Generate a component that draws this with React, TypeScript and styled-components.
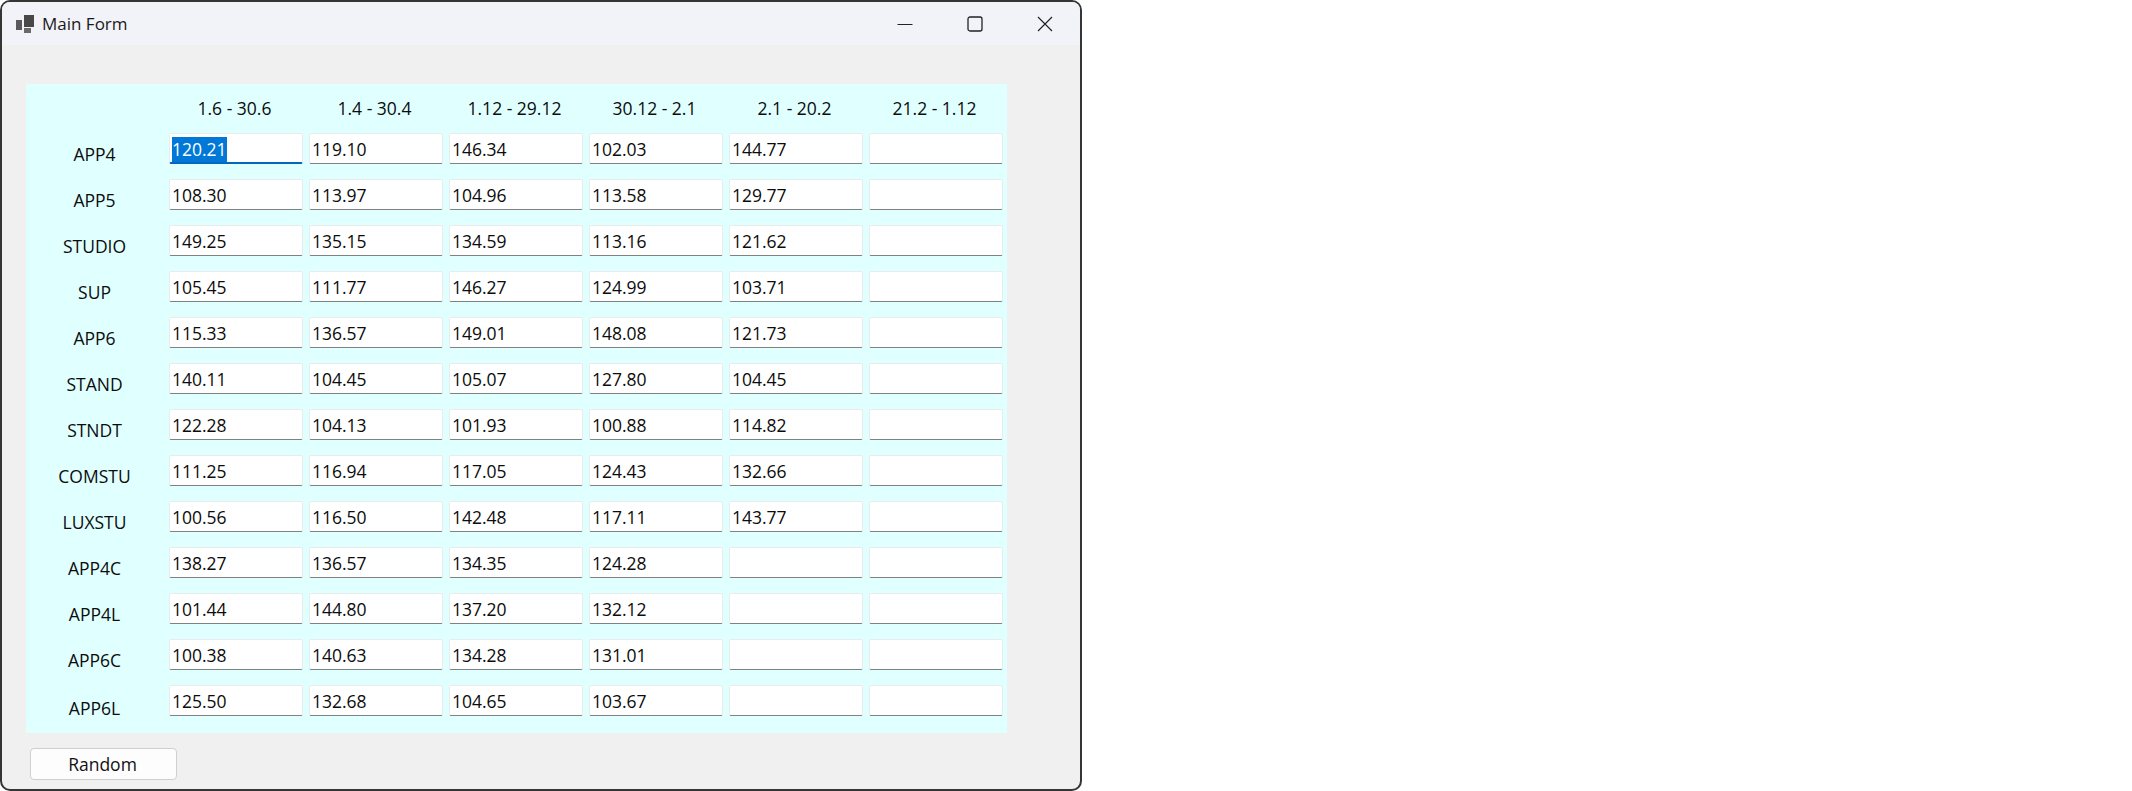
import React from "react";
import styled, { createGlobalStyle } from "styled-components";

const Global = createGlobalStyle`
  html, body { margin: 0; padding: 0; background: #fff; }
  #root { width: 2132px; height: 791px; overflow: hidden; }
`;

const Win = styled.div`
  width: 1082px;
  height: 791px;
  box-sizing: border-box;
  border: 2px solid #353535;
  border-radius: 10px;
  background: #f0f0f0;
  overflow: hidden;
  display: flex;
  flex-direction: column;
  font-family: "Open Sans", "Noto Sans", sans-serif;
  font-size: 17.5px;
  color: #0c0c0c;
`;

const TitleBar = styled.div`
  height: 43px;
  flex: none;
  background: #f2f3f9;
  display: flex;
  align-items: center;
  padding-left: 13px;
`;

const AppIcon = styled.svg`
  width: 20px;
  height: 20px;
  margin-right: 7px;
  margin-top: 2px;
`;

const Title = styled.span`
  flex: 1;
  font-size: 17px;
  color: #1a1a1a;
`;

const Caption = styled.button`
  width: 70px;
  height: 43px;
  border: 0;
  padding: 0;
  background: transparent;
  display: flex;
  align-items: center;
  justify-content: center;
`;

const Body = styled.div`
  flex: 1;
  display: flex;
  flex-direction: column;
  align-items: flex-start;
  padding: 39px 0 0 24px;
`;

const Panel = styled.div`
  width: 981px;
  height: 649px;
  box-sizing: border-box;
  background: #e0ffff;
  padding: 15px 0 0 0;
  display: grid;
  grid-template-columns: 137px repeat(6, 134px);
  column-gap: 6px;
  grid-template-rows: 19px repeat(13, 31px);
  row-gap: 15px;
  align-content: start;
`;

const Head = styled.div`
  text-align: center;
  line-height: 19px;
  padding-right: 3px;
  white-space: nowrap;
`;

const RowLabel = styled.div<{ $last?: boolean }>`
  text-align: center;
  padding: ${(p) => (p.$last ? "11px" : "9px")} 0 0 0;
  line-height: 24px;
  height: 31px;
  box-sizing: border-box;
  white-space: nowrap;
`;

const Cell = styled.div<{ $focused?: boolean }>`
  height: 31px;
  box-sizing: border-box;
  background: #fff;
  border: 1px solid #e9ecec;
  border-bottom: ${(p) => (p.$focused ? "2px solid #0067c0" : "1px solid #808080")};
  border-radius: 2px;
  padding: 2px 0 0 2px;
  line-height: 26px;
`;

const Selected = styled.span`
  display: inline-block;
  background: #0078d7;
  color: #fff;
  height: 25px;
  line-height: 25px;
`;

const Footer = styled.div`
  padding: 15px 0 0 4px;
`;

const RandomButton = styled.button`
  width: 147px;
  height: 32px;
  box-sizing: border-box;
  background: #fdfdfd;
  border: 1px solid #cfcfcf;
  border-radius: 4px;
  font: inherit;
  color: #111;
  padding: 0 2px 0 0;
`;

const columns = ["1.6 - 30.6", "1.4 - 30.4", "1.12 - 29.12", "30.12 - 2.1", "2.1 - 20.2", "21.2 - 1.12"];
const rows: [string, string[]][] = [
  ["APP4", ["120.21", "119.10", "146.34", "102.03", "144.77", ""]],
  ["APP5", ["108.30", "113.97", "104.96", "113.58", "129.77", ""]],
  ["STUDIO", ["149.25", "135.15", "134.59", "113.16", "121.62", ""]],
  ["SUP", ["105.45", "111.77", "146.27", "124.99", "103.71", ""]],
  ["APP6", ["115.33", "136.57", "149.01", "148.08", "121.73", ""]],
  ["STAND", ["140.11", "104.45", "105.07", "127.80", "104.45", ""]],
  ["STNDT", ["122.28", "104.13", "101.93", "100.88", "114.82", ""]],
  ["COMSTU", ["111.25", "116.94", "117.05", "124.43", "132.66", ""]],
  ["LUXSTU", ["100.56", "116.50", "142.48", "117.11", "143.77", ""]],
  ["APP4C", ["138.27", "136.57", "134.35", "124.28", "", ""]],
  ["APP4L", ["101.44", "144.80", "137.20", "132.12", "", ""]],
  ["APP6C", ["100.38", "140.63", "134.28", "131.01", "", ""]],
  ["APP6L", ["125.50", "132.68", "104.65", "103.67", "", ""]],
];

export default function App() {
  return (
    <>
      <Global />
      <Win>
        <TitleBar>
          <AppIcon viewBox="0 0 20 20">
            <rect x="1" y="5" width="6" height="10" fill="#5a5a5a" />
            <rect x="9" y="0" width="10" height="12" fill="#484848" />
            <rect x="9" y="13" width="7" height="5" fill="#6a6a6a" />
          </AppIcon>
          <Title>Main Form</Title>
          <Caption aria-label="Minimize">
            <svg width="16" height="16" viewBox="0 0 16 16">
              <path d="M0.5 8.5H15.5" stroke="#222" strokeWidth="1" fill="none" />
            </svg>
          </Caption>
          <Caption aria-label="Maximize">
            <svg width="16" height="16" viewBox="0 0 16 16">
              <rect x="1" y="1" width="14" height="14" rx="2" stroke="#222" strokeWidth="1.3" fill="none" />
            </svg>
          </Caption>
          <Caption aria-label="Close">
            <svg width="16" height="16" viewBox="0 0 16 16">
              <path d="M1 1L15 15M15 1L1 15" stroke="#222" strokeWidth="1.2" fill="none" />
            </svg>
          </Caption>
        </TitleBar>
        <Body>
          <Panel>
            <div />
            {columns.map((c) => (
              <Head key={c}>{c}</Head>
            ))}
            {rows.map(([name, vals], r) => (
              <React.Fragment key={name}>
                <RowLabel $last={r === rows.length - 1}>{name}</RowLabel>
                {vals.map((v, i) =>
                  r === 0 && i === 0 ? (
                    <Cell key={i} $focused>
                      <Selected>{v}</Selected>
                    </Cell>
                  ) : (
                    <Cell key={i}>{v}</Cell>
                  )
                )}
              </React.Fragment>
            ))}
          </Panel>
          <Footer>
            <RandomButton>Random</RandomButton>
          </Footer>
        </Body>
      </Win>
    </>
  );
}
